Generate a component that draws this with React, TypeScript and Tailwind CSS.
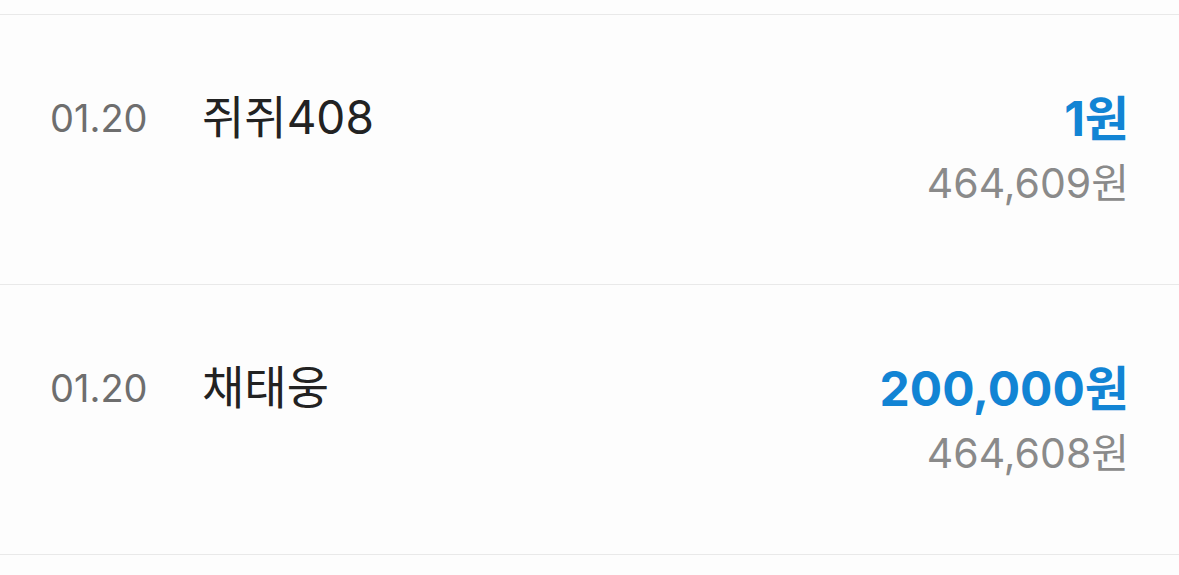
import React from "react";

const rows = [
  { date: "01.20", name: "쥐쥐408", amount: "1원", balance: "464,609원" },
  { date: "01.20", name: "채태웅", amount: "200,000원", balance: "464,608원" },
];

export default function App() {
  return (
    <div
      className="h-[575px] w-[1179px] overflow-hidden bg-[#fdfdfd]"
      style={{ fontFamily: "Inter, 'Noto Sans CJK KR', sans-serif" }}
    >
      <div className="h-[15px] border-b border-[#e9e9e9]" />
      {rows.map((r, i) => (
        <div
          key={i}
          className="flex h-[270px] items-start border-b border-[#e9e9e9] pl-[50px] pr-[50px] pt-[76px]"
        >
          <div className="mt-[5px] w-[152px] text-[38px] leading-[44px] text-[#6e6e6e]">
            {r.date}
          </div>
          <div className="mt-[0px] flex-1 text-[46px] leading-[52px] text-[#222222]">
            {r.name}
          </div>
          <div className="flex flex-col items-end">
            <div className="text-[48px] font-bold leading-[56px] text-[#1284d4]">
              {r.amount}
            </div>
            <div className="mt-[14px] text-[41px] leading-[44px] text-[#8a8a8a]">
              {r.balance}
            </div>
          </div>
        </div>
      ))}
    </div>
  );
}
